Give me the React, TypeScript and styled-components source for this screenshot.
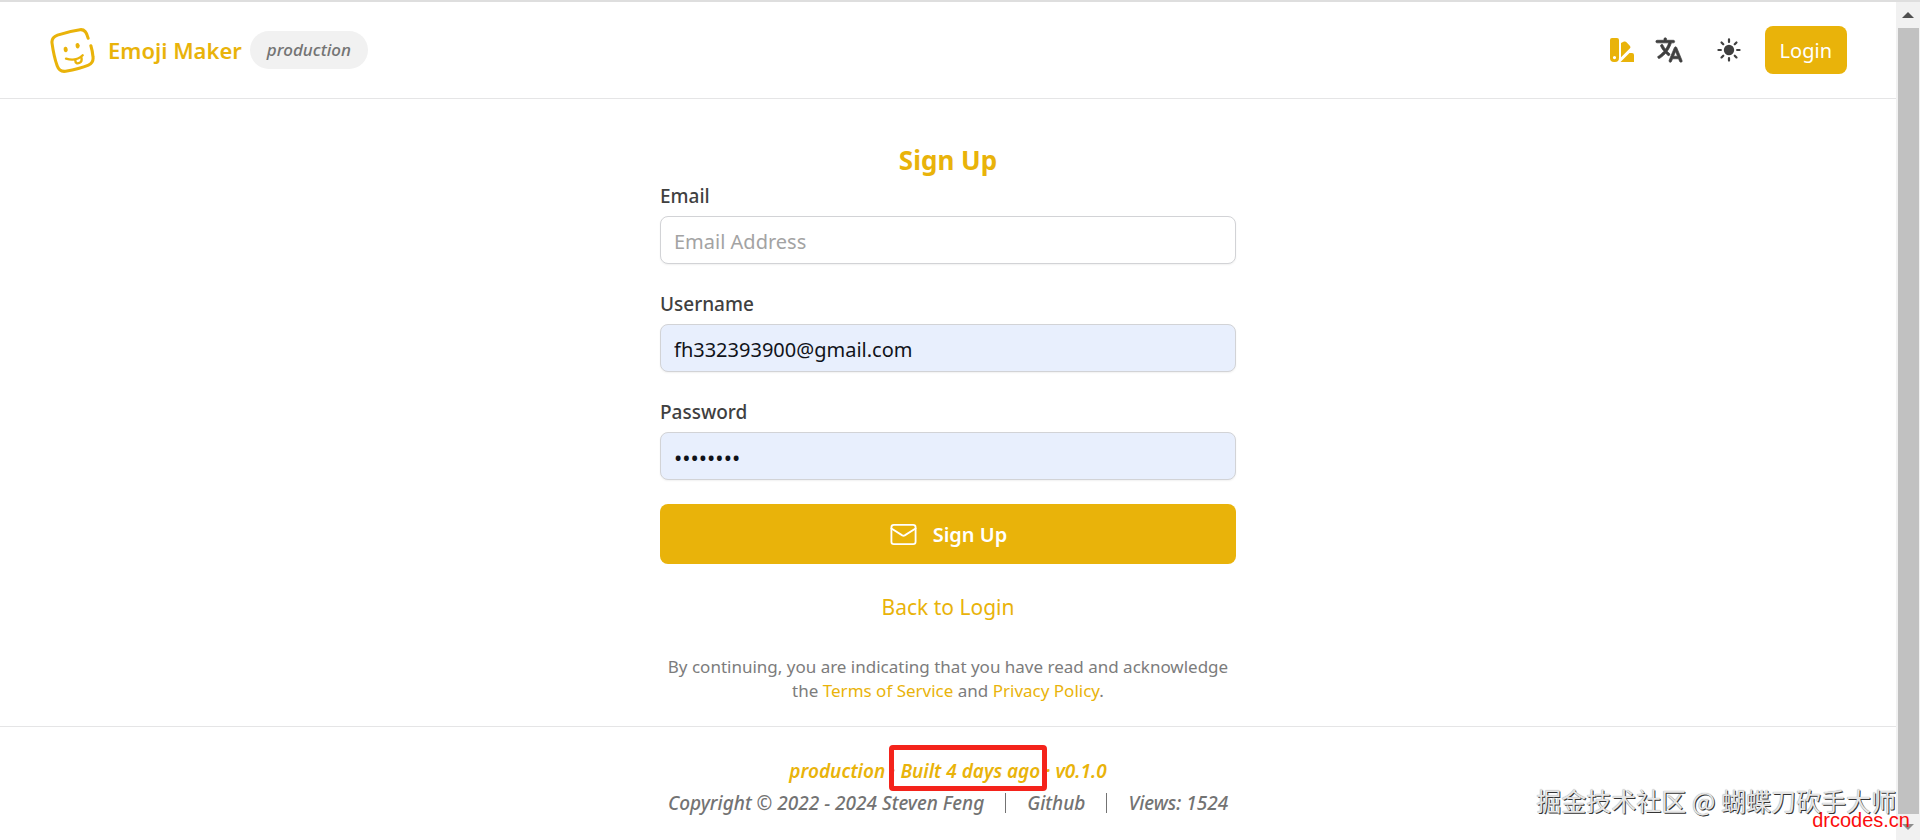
import React from 'react';
import styled, { createGlobalStyle } from 'styled-components';
import { IoLanguage, IoSunny } from 'react-icons/io5';
import { Mail } from 'lucide-react';

const accent = '#e9b30a';
const line = '#e5e5e6';

const GlobalStyle = createGlobalStyle`
  *, *::before, *::after { box-sizing: border-box; }
  body {
    margin: 0;
    background: #fff;
    color: #404040;
    font-family: 'Noto Sans', 'Noto Sans CJK SC', sans-serif;
  }
  button, input { font: inherit; }
  a { text-decoration: none; color: inherit; }
`;

const Screen = styled.div`
  position: relative;
  display: flex;
  min-height: 100vh;
  border-top: 2px solid #dedede;
`;

const Page = styled.div`
  flex: 1;
  min-width: 0;
  display: flex;
  flex-direction: column;
`;

const Header = styled.header`
  display: flex;
  align-items: center;
  justify-content: space-between;
  padding: 24px 49px 24px 50px;
  border-bottom: 1px solid ${line};
`;

const Brand = styled.div`
  display: flex;
  align-items: center;
  gap: 8px;
`;

const BrandLink = styled.a`
  display: flex;
  align-items: center;
  gap: 12px;
  color: ${accent};
  font-size: 22px;
  font-weight: 600;
  line-height: 32px;
`;

const Badge = styled.span`
  padding: 4px 17px;
  border-radius: 20px;
  background: #f1f1f1;
  color: #747474;
  font-size: 17px;
  font-style: italic;
  font-weight: 500;
  line-height: 30px;
`;

const Actions = styled.nav`
  display: flex;
  align-items: center;
  gap: 23px;
`;

const IconGroup = styled.div`
  display: flex;
  align-items: center;
  gap: 32px;
`;

const IconPair = styled.div`
  display: flex;
  align-items: center;
  gap: 20px;
`;

const IconButton = styled.button<{ $color?: string }>`
  display: flex;
  padding: 0;
  border: 0;
  background: none;
  color: ${({ $color }) => $color ?? '#3f3f3f'};
  cursor: pointer;
`;

const LanguageIcon = styled(IoLanguage)`
  stroke: currentColor;
  stroke-width: 12px;
`;

const LoginButton = styled.button`
  height: 48px;
  padding: 2px 15px 0;
  border: 0;
  border-radius: 8px;
  background: ${accent};
  color: #fff;
  font-size: 20px;
  line-height: 28px;
  cursor: pointer;
`;

const Main = styled.main`
  flex: 1;
  display: flex;
  flex-direction: column;
  align-items: center;
  padding: 45px 24px 23px;
`;

const Form = styled.form`
  width: 100%;
  max-width: 576px;
  display: flex;
  flex-direction: column;
`;

const Title = styled.h1`
  margin: 0 0 6px;
  color: ${accent};
  font-size: 26px;
  font-weight: 700;
  line-height: 32px;
  text-align: center;
`;

const Fields = styled.div`
  display: flex;
  flex-direction: column;
  gap: 26px;
`;

const Field = styled.div`
  display: flex;
  flex-direction: column;
  gap: 6px;
`;

const Label = styled.label`
  font-size: 19px;
  font-weight: 500;
  line-height: 28px;
`;

const TextInput = styled.input<{ $filled?: boolean }>`
  width: 100%;
  height: 48px;
  padding: 2px 13px 0;
  border: 1px solid #d2d3d6;
  border-radius: 8px;
  background: ${({ $filled }) => ($filled ? '#e8effd' : '#fff')};
  box-shadow: 0 1px 2px rgba(0, 0, 0, 0.06);
  color: #10131a;
  font-size: 20px;
  outline: none;
  &::placeholder { color: #a3a3a3; opacity: 1; }
  &[type='password'] { font-size: 22px; }
`;

const SubmitButton = styled.button`
  display: flex;
  align-items: center;
  justify-content: center;
  gap: 15px;
  height: 60px;
  margin-top: 24px;
  border: 0;
  border-radius: 8px;
  background: ${accent};
  color: #fff;
  font-size: 20px;
  font-weight: 600;
  cursor: pointer;
`;

const BackLink = styled.a`
  margin-top: 29px;
  color: ${accent};
  font-size: 21px;
  line-height: 28px;
`;

const Terms = styled.p`
  max-width: 576px;
  margin: 34px 0 0;
  color: #7c7c7c;
  font-size: 17px;
  line-height: 24px;
  text-align: center;
  a { color: ${accent}; }
`;

const Footer = styled.footer`
  display: flex;
  flex-direction: column;
  align-items: center;
  padding: 28px 24px 21px;
  border-top: 1px solid ${line};
  color: #737373;
  font-size: 19px;
  font-style: italic;
  font-weight: 500;
  line-height: 32px;
`;

const Build = styled.div`
  color: ${accent};
  font-weight: 600;
`;

const Highlighted = styled.span`
  position: relative;
  &::after {
    content: '';
    position: absolute;
    inset: -13px -7px -7px -11px;
    border: 5px solid #f4231b;
    border-radius: 4px;
  }
`;

const Legal = styled.div`
  display: flex;
  align-items: center;
`;

const Divider = styled.span`
  width: 1px;
  height: 20px;
  margin: 0 21px;
  background: #737373;
`;

const ScrollBar = styled.div`
  width: 24px;
  display: flex;
  flex-direction: column;
  align-items: center;
  background: #f1f1f1;
`;

const ScrollArrow = styled.span<{ $down?: boolean }>`
  display: flex;
  align-items: center;
  justify-content: center;
  height: 26px;
  color: ${({ $down }) => ($down ? '#8d8d8d' : '#505050')};
  svg { transform: ${({ $down }) => ($down ? 'rotate(180deg)' : 'none')}; }
`;

const ScrollThumb = styled.span`
  flex: 1;
  width: 21px;
  background: #c1c1c1;
`;

const Watermark = styled.div`
  position: absolute;
  right: 24px;
  bottom: 20px;
  color: #e6e6e6;
  font-family: 'Noto Sans CJK SC', sans-serif;
  font-size: 25px;
  line-height: 40px;
  text-shadow: 1px 1px 0 #333, 0 0 1px #888;
`;

const SiteMark = styled.div`
  position: absolute;
  right: 10px;
  bottom: 8px;
  color: #fb0d0d;
  font-family: 'Liberation Sans', sans-serif;
  font-size: 20px;
  line-height: 24px;
`;

const Logo = () => (
  <svg width="46" height="47" viewBox="60 80 135 138" fill="none" stroke="currentColor" strokeWidth="9" strokeLinecap="round" strokeLinejoin="round" aria-hidden="true">
    <path d="M172 113C168 96 162 86 148 88C125 91 105 96 82 104C69 109 64 116 66 128C69 150 74 174 81 194C86 208 93 212 106 210C130 206 152 201 173 192C184 187 188 178 186 166C185 154 183 145 180 135" />
    <ellipse cx="106" cy="146" rx="6" ry="8" fill="currentColor" stroke="none" transform="rotate(-12 106 146)" />
    <ellipse cx="141" cy="135" rx="6" ry="8" fill="currentColor" stroke="none" transform="rotate(-12 141 135)" />
    <path strokeWidth="7" d="M107 173C124 178 143 176 156 163" />
    <path strokeWidth="7" d="M134 176C134 188 141 188 147 185C153 182 154 176 152 169" />
  </svg>
);

const SwatchIcon = () => (
  <svg width="24" height="24" viewBox="0 0 24 24" fill="currentColor" aria-hidden="true">
    <path fillRule="evenodd" d="M2 0H7Q9 0 9 2V20Q9 24 5 24H4Q0 24 0 20V2Q0 0 2 0ZM4.5 18A1.6 1.6 0 1 0 4.5 21.2A1.6 1.6 0 1 0 4.5 18Z" />
    <path d="M11 5L14 3.6Q15.500 3 16.500 4.200L20 8Q21 9.200 20 10.300L11 19.300Z" />
    <path d="M10.500 24L19.500 15H22Q24 15 24 17V24Z" />
  </svg>
);

const Arrow = () => (
  <svg width="12" height="6" viewBox="0 0 12 6" fill="currentColor" aria-hidden="true">
    <path d="M0 6L6 0L12 6Z" />
  </svg>
);

export default function App() {
  return (
    <>
      <GlobalStyle />
      <Screen>
        <Page>
          <Header>
            <Brand>
              <BrandLink href="#home">
                <Logo />
                Emoji Maker
              </BrandLink>
              <Badge>production</Badge>
            </Brand>
            <Actions>
              <IconGroup>
                <IconPair>
                  <IconButton type="button" aria-label="Theme colour" $color={accent}>
                    <SwatchIcon />
                  </IconButton>
                  <IconButton type="button" aria-label="Language">
                    <LanguageIcon size={30} />
                  </IconButton>
                </IconPair>
                <IconButton type="button" aria-label="Light mode">
                  <IoSunny size={26} />
                </IconButton>
              </IconGroup>
              <LoginButton type="button">Login</LoginButton>
            </Actions>
          </Header>

          <Main>
            <Form onSubmit={(event) => event.preventDefault()}>
              <Title>Sign Up</Title>
              <Fields>
                <Field>
                  <Label htmlFor="email">Email</Label>
                  <TextInput id="email" type="email" placeholder="Email Address" />
                </Field>
                <Field>
                  <Label htmlFor="username">Username</Label>
                  <TextInput id="username" type="text" defaultValue="fh332393900@gmail.com" $filled />
                </Field>
                <Field>
                  <Label htmlFor="password">Password</Label>
                  <TextInput id="password" type="password" defaultValue="password" $filled />
                </Field>
              </Fields>
              <SubmitButton type="submit">
                <Mail size={29} strokeWidth={1.5} aria-hidden="true" />
                Sign Up
              </SubmitButton>
            </Form>
            <BackLink href="#login">Back to Login</BackLink>
            <Terms>
              By continuing, you are indicating that you have read and acknowledge the{' '}
              <a href="#terms">Terms of Service</a> and <a href="#privacy">Privacy Policy</a>.
            </Terms>
          </Main>

          <Footer>
            <Build>
              production · <Highlighted>Built 4 days ago</Highlighted> · v0.1.0
            </Build>
            <Legal>
              <span>Copyright © 2022 - 2024 Steven Feng</span>
              <Divider />
              <a href="#github">Github</a>
              <Divider />
              <span>Views: 1524</span>
            </Legal>
          </Footer>
        </Page>

        <ScrollBar aria-hidden="true">
          <ScrollArrow><Arrow /></ScrollArrow>
          <ScrollThumb />
          <ScrollArrow $down><Arrow /></ScrollArrow>
        </ScrollBar>

        <Watermark>掘金技术社区 @ 蝴蝶刀砍手大师</Watermark>
        <SiteMark>drcodes.cn</SiteMark>
      </Screen>
    </>
  );
}
